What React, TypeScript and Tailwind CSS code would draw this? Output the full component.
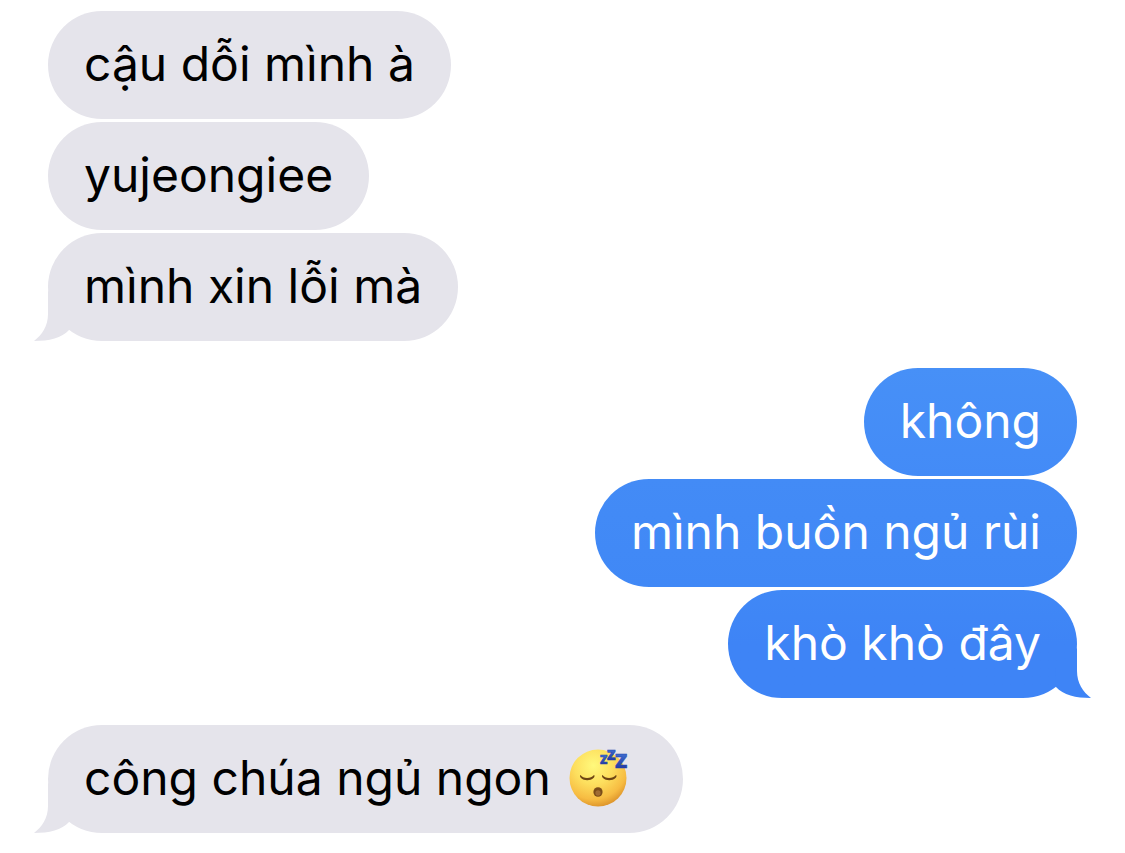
import React from 'react'
import clsx from 'clsx'

interface Message {
  text: string
  sleepy?: boolean
}

interface MessageGroup {
  from: 'them' | 'me'
  messages: Message[]
}

const groups: MessageGroup[] = [
  {
    from: 'them',
    messages: [{ text: 'cậu dỗi mình à' }, { text: 'yujeongiee' }, { text: 'mình xin lỗi mà' }],
  },
  {
    from: 'me',
    messages: [{ text: 'không' }, { text: 'mình buồn ngủ rùi' }, { text: 'khò khò đây' }],
  },
  {
    from: 'them',
    messages: [{ text: 'công chúa ngủ ngon', sleepy: true }],
  },
]

// One shade per bubble so the column darkens on the way down
const sentColors = [
  'bg-linear-to-b from-[#4790f7] to-[#438bf7]',
  'bg-linear-to-b from-[#438bf6] to-[#4088f6]',
  'bg-linear-to-b from-[#4088f6] to-[#3e84f6] to-50%',
]

const SleepingFace: React.FC = () => (
  <svg role="img" aria-label="sleeping face" viewBox="0 0 62 62" className="ml-4 mr-[18px] size-[62px] shrink-0 overflow-visible">
    <defs>
      <radialGradient id="face" cx="0.42" cy="0.28" r="0.74">
        <stop offset="0" stopColor="#fff97c" />
        <stop offset="0.45" stopColor="#fddf5e" />
        <stop offset="0.8" stopColor="#f7bc42" />
        <stop offset="1" stopColor="#dc922a" />
      </radialGradient>
      <linearGradient id="zed" x1="0" y1="0" x2="0" y2="1">
        <stop offset="0" stopColor="#4a84e4" />
        <stop offset="1" stopColor="#1a2790" />
      </linearGradient>
    </defs>
    <circle cx="31" cy="31" r="28.5" fill="url(#face)" />
    <g fill="#6d4513">
      <path d="M13.5 28C16 32 24 32 27 28C28 28.5 27.5 30 26.5 31C23.5 34 17 34 14 31C13 30 12.5 28.5 13.5 28Z" />
      <path d="M35.5 28C38 32 46 32 49 28C50 28.5 49.5 30 48.5 31C45.5 34 39 34 36 31C35 30 34.5 28.5 35.5 28Z" />
    </g>
    <ellipse cx="31" cy="45" rx="4.6" ry="4.8" fill="#7b4c18" />
    <ellipse cx="31" cy="46" rx="2.6" ry="2.8" fill="#a06c34" />
    <g fill="url(#zed)" stroke="#2340ac" strokeWidth="0.5" className="font-['Open_Sans',sans-serif] font-extrabold">
      <text x="33" y="17" fontSize="12">Z</text>
      <text x="40" y="13" fontSize="14">Z</text>
      <text x="48" y="21" fontSize="20">Z</text>
    </g>
  </svg>
)

const Tail: React.FC<{ mine: boolean }> = ({ mine }) => (
  <svg
    aria-hidden="true"
    viewBox="0 0 36 60"
    className={clsx(
      'absolute bottom-0 h-[60px] w-9',
      mine ? '-right-3.5 -scale-x-100 fill-[#3e84f6]' : '-left-3.5 fill-[#e5e4eb]'
    )}
  >
    <path d="M14 10V33C14 45 8 54 0 60C15 60 28 57 35 49L36 30Z" />
  </svg>
)

export default function App() {
  return (
    <main className="flex flex-col gap-[27px] bg-white px-12 py-[11px] font-[Inter,'Noto_Sans',sans-serif] text-[48px] leading-[60px]">
      {groups.map((group, g) => {
        const mine = group.from === 'me'
        return (
          <ul key={g} className={clsx('flex flex-col gap-[3px]', mine ? 'items-end' : 'items-start')}>
            {group.messages.map((message, i) => (
              <li
                key={message.text}
                className={clsx(
                  'relative flex min-h-[108px] items-center rounded-[54px] px-9 pb-0.5',
                  mine ? ['text-white', sentColors[i]] : 'bg-[#e5e4eb] text-black'
                )}
              >
                {i === group.messages.length - 1 && <Tail mine={mine} />}
                <span className="relative">{message.text}</span>
                {message.sleepy && <SleepingFace />}
              </li>
            ))}
          </ul>
        )
      })}
    </main>
  )
}
